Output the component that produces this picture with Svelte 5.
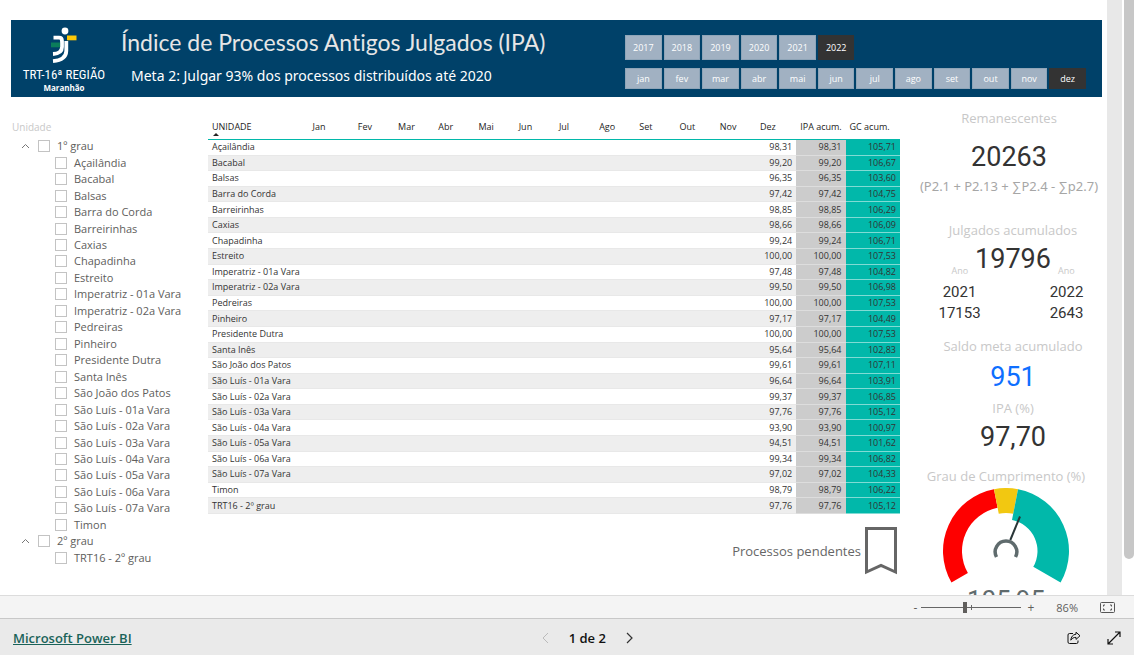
<script lang="ts">
  const years = ["2017", "2018", "2019", "2020", "2021", "2022"];
  const monthKeys = ["jan", "fev", "mar", "abr", "mai", "jun", "jul", "ago", "set", "out", "nov", "dez"];
  const monthCols = ["Jan", "Fev", "Mar", "Abr", "Mai", "Jun", "Jul", "Ago", "Set", "Out", "Nov", "Dez"];

  // unidade, IPA acumulado, grau de cumprimento acumulado
  const rows: [string, string, string][] = [
    ["Açailândia", "98,31", "105,71"],
    ["Bacabal", "99,20", "106,67"],
    ["Balsas", "96,35", "103,60"],
    ["Barra do Corda", "97,42", "104,75"],
    ["Barreirinhas", "98,85", "106,29"],
    ["Caxias", "98,66", "106,09"],
    ["Chapadinha", "99,24", "106,71"],
    ["Estreito", "100,00", "107,53"],
    ["Imperatriz - 01a Vara", "97,48", "104,82"],
    ["Imperatriz - 02a Vara", "99,50", "106,98"],
    ["Pedreiras", "100,00", "107,53"],
    ["Pinheiro", "97,17", "104,49"],
    ["Presidente Dutra", "100,00", "107,53"],
    ["Santa Inês", "95,64", "102,83"],
    ["São João dos Patos", "99,61", "107,11"],
    ["São Luís - 01a Vara", "96,64", "103,91"],
    ["São Luís - 02a Vara", "99,37", "106,85"],
    ["São Luís - 03a Vara", "97,76", "105,12"],
    ["São Luís - 04a Vara", "93,90", "100,97"],
    ["São Luís - 05a Vara", "94,51", "101,62"],
    ["São Luís - 06a Vara", "99,34", "106,82"],
    ["São Luís - 07a Vara", "97,02", "104,33"],
    ["Timon", "98,79", "106,22"],
    ["TRT16 - 2º grau", "97,76", "105,12"],
  ];

  const names = rows.map((r) => r[0]);
  const groups = [
    { name: "1º grau", units: names.slice(0, -1) },
    { name: "2º grau", units: names.slice(-1) },
  ];

  let year = $state("2022");
  let month = $state("dez");
  let open = $state([true, true]);
  let zoom = $state(43);

  // ring segment, angles in degrees clockwise from the top
  function segment(a: number, b: number, outer: number, inner: number): string {
    const p = (deg: number, r: number) => {
      const t = (deg * Math.PI) / 180;
      return `${(64 + r * Math.sin(t)).toFixed(2)} ${(63 - r * Math.cos(t)).toFixed(2)}`;
    };
    return `M${p(a, outer)}A${outer} ${outer} 0 0 1 ${p(b, outer)}L${p(b, inner)}A${inner} ${inner} 0 0 0 ${p(a, inner)}Z`;
  }
</script>

<div class="app">
  <div class="viewport">
    <div class="report">
      <header class="banner">
        <div class="logo">
          <svg width="26" height="37" viewBox="0 0 26 37" aria-hidden="true">
            <circle cx="14" cy="4" r="3.4" fill="#fff" />
            <path d="M2.500 10.700H8Q11 10.700 11 14V20Q11 26.500 2 27" fill="none" stroke="#fff" stroke-width="3.800" />
            <path d="M15.300 14V24Q15 33 2 34.200" fill="none" stroke="#fff" stroke-width="3.800" />
            <path d="M16 8.500h9.500v4.800H16z" fill="#fdc907" />
            <path d="M0 15.500h9.100v4.800H0z" fill="#0b7d5b" />
          </svg>
          <span class="logo-name">TRT-16ª REGIÃO</span>
          <span class="logo-state">Maranhão</span>
        </div>
        <div class="titles">
          <h1>Índice de Processos Antigos Julgados (IPA)</h1>
          <p>Meta 2: Julgar 93% dos processos distribuídos até 2020</p>
        </div>
        <div class="filters">
          <div class="tiles years">
            {#each years as y}
              <button class:active={y === year} onclick={() => (year = y)}>{y}</button>
            {/each}
          </div>
          <div class="tiles">
            {#each monthKeys as m}
              <button class:active={m === month} onclick={() => (month = m)}>{m}</button>
            {/each}
          </div>
        </div>
      </header>

      <main class="body">
        <section class="slicer">
          <h2>Unidade</h2>
          <div class="tree">
            {#each groups as g, i}
              <div class="node">
                <button class="toggle" aria-label={g.name} onclick={() => (open[i] = !open[i])}>
                  <svg width="9" height="6" viewBox="0 0 9 6"><path d="M1 5l3.500-3.500L8 5" fill="none" stroke="#777" /></svg>
                </button>
                <label><input type="checkbox" />{g.name}</label>
              </div>
              {#if open[i]}
                {#each g.units as u}
                  <div class="node child"><label><input type="checkbox" />{u}</label></div>
                {/each}
              {/if}
            {/each}
          </div>
        </section>

        <section class="matrix">
          <table>
            <colgroup>
              <col class="c-name" />
              <col class="c-jan" />
              {#each monthCols.slice(1) as _}<col class="c-month" />{/each}
              <col class="c-ipa" />
              <col class="c-gc" />
            </colgroup>
            <thead>
              <tr>
                <th class="sorted">UNIDADE</th>
                {#each monthCols as m}<th>{m}</th>{/each}
                <th>IPA acum.</th>
                <th>GC acum.</th>
              </tr>
            </thead>
            <tbody>
              {#each rows as [name, ipa, gc]}
                <tr>
                  <td class="name">{name}</td>
                  {#each monthCols.slice(0, -1) as _}<td></td>{/each}
                  <td>{ipa}</td>
                  <td class="ipa">{ipa}</td>
                  <td class="gc">{gc}</td>
                </tr>
              {/each}
            </tbody>
          </table>
          <button class="pending">
            Processos pendentes
            <svg width="32" height="48" viewBox="0 0 32 48"><path d="M1.500 1.500h29v43.500L16 38.500 1.500 45z" fill="none" stroke="#666" stroke-width="3" /></svg>
          </button>
        </section>

        <aside class="kpis">
          <h3>Remanescentes</h3>
          <div class="big first">20263</div>
          <div class="formula">(P2.1 + P2.13 + ∑P2.4 - ∑p2.7)</div>

          <div class="totals">
            <h3>Julgados acumulados</h3>
            <div class="judged">
              <span class="ano">Ano</span>
              <span class="big">19796</span>
              <span class="ano">Ano</span>
            </div>
            <div class="split">
              <div>2021<br />17153</div>
              <div>2022<br />2643</div>
            </div>

            <h3>Saldo meta acumulado</h3>
            <div class="big blue">951</div>
            <h3>IPA (%)</h3>
            <div class="big">97,70</div>
          </div>

          <div class="gauge">
            <h3>Grau de Cumprimento (%)</h3>
            <svg width="128" height="98" viewBox="0 0 128 98">
              <path d={segment(-120, -11, 63, 44)} fill="#fe0000" />
              <path d={segment(-11, 11, 63, 38)} fill="#f2c811" />
              <path d={segment(11, 120, 63, 31.5)} fill="#01b8aa" />
              <path d="M54.500 69A10.800 10.800 0 1 1 73.500 69" fill="none" stroke="#5f6b6d" stroke-width="3.500" />
              <path d="M68.300 52L78 28.500" stroke="#293537" stroke-width="2" />
            </svg>
            <div class="gauge-value">105,95</div>
          </div>
        </aside>
      </main>
    </div>
    <div class="gutter"></div>
    <div class="scrollbar"><div class="thumb"></div></div>
  </div>

  <div class="zoombar">
    <button aria-label="Diminuir zoom">-</button>
    <input type="range" min="0" max="100" bind:value={zoom} aria-label="Zoom" />
    <button aria-label="Aumentar zoom">+</button>
    <span class="percent">86%</span>
    <button class="fit" aria-label="Ajustar à página">
      <svg width="15" height="11" viewBox="0 0 15 11" fill="none" stroke="#555">
        <rect x=".5" y=".5" width="14" height="10" rx="1" />
        <path d="M5 3H3.500v1.500M10 3h1.500v1.500M5 8H3.500V6.500M10 8h1.500V6.500" />
      </svg>
    </button>
  </div>

  <footer class="footer">
    <a href="https://powerbi.microsoft.com">Microsoft Power BI</a>
    <nav class="pager">
      <button aria-label="Página anterior" disabled>
        <svg width="7" height="12" viewBox="0 0 7 12"><path d="M6 1L1 6l5 5" fill="none" stroke="#bbb" /></svg>
      </button>
      <span>1 de 2</span>
      <button aria-label="Próxima página">
        <svg width="7" height="12" viewBox="0 0 7 12"><path d="M1 1l5 5-5 5" fill="none" stroke="#333" stroke-width="1.200" /></svg>
      </button>
    </nav>
    <div class="actions">
      <button aria-label="Compartilhar">
        <svg width="14" height="14" viewBox="0 0 14 14" fill="none" stroke="#111" stroke-linejoin="round">
          <path d="M6 2.500H2.500a1.500 1.500 0 0 0-1.500 1.500v7A1.500 1.500 0 0 0 2.500 12.500h7a1.500 1.500 0 0 0 1.500-1.500V9.500" />
          <path d="M9 1.200l4 3.600-4 3.600V6.400C6.500 6.300 5 7.300 3.800 9.200 4 6 5.800 3.500 9 3.200z" />
        </svg>
      </button>
      <button aria-label="Tela inteira">
        <svg width="14" height="14" viewBox="0 0 14 14" fill="none" stroke="#111" stroke-width="1.200">
          <path d="M1 13L13 1M8 1h5v5M1 8v5h5" />
        </svg>
      </button>
    </div>
  </footer>
</div>

<style>
  :global(body) {
    background: #fff;
  }
  .app {
    display: flex;
    flex-direction: column;
    height: 100vh;
    font-family: "Open Sans", "Noto Sans", sans-serif;
    color: #333;
  }
  button {
    padding: 0;
    border: 0;
    background: none;
    font: inherit;
    color: inherit;
    cursor: pointer;
  }
  h1, h2, h3, p {
    margin: 0;
    font-weight: 400;
  }
  svg {
    display: block;
  }

  .viewport {
    flex: 1;
    min-height: 0;
    display: flex;
    overflow: hidden;
  }
  .report {
    flex: 1;
    min-width: 0;
    padding: 20px 0 0 11px;
  }
  .gutter {
    width: 15px;
    background: #e8e8e8;
  }
  .scrollbar {
    width: 10px;
    margin-left: 2px;
  }
  .thumb {
    height: 94%;
    border-radius: 0 0 5px 5px;
    background: #c7c7c7;
  }

  .banner {
    display: flex;
    height: 77px;
    margin-right: 5px;
    background: #004169;
    color: #fff;
  }
  .logo {
    width: 106px;
    padding-top: 7px;
    display: flex;
    flex-direction: column;
    align-items: center;
  }
  .logo-name {
    margin-top: 2px;
    font: 13px/18px "Roboto Condensed", Roboto, sans-serif;
    white-space: nowrap;
  }
  .logo-state {
    font-size: 8px;
    line-height: 8px;
    font-weight: 700;
  }
  .titles {
    flex: 1;
    padding: 6px 0 0 4px;
    white-space: nowrap;
  }
  h1 {
    font: 23px/32px Lato, "Open Sans", sans-serif;
    font-variant-ligatures: none;
    color: #e6e6e6;
  }
  .titles p {
    padding: 8px 0 0 10px;
    font: 14px/20px "Noto Sans", sans-serif;
  }
  .filters {
    width: 461px;
    margin-right: 16px;
    padding-top: 15px;
  }
  .tiles {
    display: grid;
    grid-template-columns: repeat(12, 1fr);
    gap: 2px;
    margin-bottom: 8px;
  }
  .tiles button {
    height: 21px;
    background: #a1b1c2;
    border: 1px solid #8fa5b8;
    font-size: 9px;
    font-weight: 500;
    color: #fff;
  }
  .years button {
    height: 25px;
  }
  .tiles .active {
    background: #333;
    border-color: #333;
  }

  .body {
    display: grid;
    grid-template-columns: 197px minmax(0, 1fr) 207px;
  }
  .slicer h2 {
    padding: 22px 0 0 1px;
    font-size: 10px;
    line-height: 16px;
    color: #c8c8c8;
  }
  .tree {
    display: grid;
    grid-auto-rows: 1fr;
    height: 428px;
    margin-top: 3px;
    font-size: 11px;
    color: #605e5c;
  }
  .node {
    display: flex;
    align-items: center;
    padding-left: 10px;
  }
  .node.child {
    padding-left: 44px;
  }
  .toggle {
    width: 17px;
  }
  .node label {
    display: flex;
    align-items: center;
    gap: 7px;
    line-height: 16px;
    white-space: nowrap;
  }
  .node input {
    appearance: none;
    width: 12px;
    height: 12px;
    margin: 0;
    border: 1px solid #c3c3c3;
    background: #fff;
  }
  .node input:checked {
    background: #605e5c;
  }

  .matrix {
    padding-top: 20px;
  }
  table {
    width: 100%;
    height: 397px;
    table-layout: fixed;
    border-collapse: collapse;
    font-size: 9px;
    line-height: 12px;
  }
  .c-name { width: 100px; }
  .c-jan { width: 45px; }
  .c-month { width: 40px; }
  .c-ipa { width: 49px; }
  .c-gc { width: 54px; }
  th {
    height: 20px;
    padding: 0 0 2px 4px;
    border-bottom: 1px solid #01b8aa;
    text-align: left;
    font-weight: 400;
    color: #252423;
    white-space: nowrap;
  }
  .sorted {
    position: relative;
  }
  .sorted::after {
    content: "";
    position: absolute;
    left: 5px;
    bottom: 3px;
    border: 3px solid transparent;
    border-top: 0;
    border-bottom-color: #252423;
  }
  td {
    height: 14px;
    padding: 0 4px;
    border-bottom: 1px solid #e8e8e8;
    text-align: right;
    white-space: nowrap;
  }
  tbody tr:nth-child(even) {
    background: #eee;
  }
  td.name {
    text-align: left;
  }
  td.ipa {
    background: #ccc;
    border-bottom-color: #ddd;
  }
  td.gc {
    background: #01b8aa;
    border-bottom-color: #80dbd4;
  }
  .pending {
    display: flex;
    align-items: center;
    gap: 4px;
    margin: 13px 3px 0 auto;
    font-size: 13px;
    color: #666;
  }

  .kpis {
    padding: 11px 0 0 11px;
    text-align: center;
    white-space: nowrap;
  }
  h3, .formula {
    font-size: 13px;
    line-height: 20px;
    color: #c8c8c8;
  }
  .formula {
    font-family: "Noto Sans", sans-serif;
    color: #a6a6a6;
  }
  .totals {
    padding: 24px 0 0 8px;
  }
  .big {
    font: 27px/38px Roboto, sans-serif;
  }
  .first {
    padding-top: 10px;
  }
  .judged {
    display: flex;
    justify-content: center;
    align-items: flex-end;
    gap: 7px;
  }
  .ano {
    font-size: 9px;
    line-height: 14px;
    color: #c8c8c8;
  }
  .split {
    display: flex;
    justify-content: center;
    gap: 65px;
    padding: 4px 0 12px;
    font: 15px/21px Roboto, sans-serif;
  }
  .split div {
    width: 42px;
  }
  .blue {
    padding: 2px 0;
    color: #0f6fff;
  }
  .gauge {
    padding: 10px 6px 0 0;
  }
  .gauge svg {
    margin: 2px auto 0;
  }
  .gauge-value {
    font: 26px/28px Roboto, sans-serif;
    color: #5f6b6d;
  }

  .zoombar {
    display: flex;
    align-items: center;
    justify-content: flex-end;
    height: 22px;
    padding-right: 19px;
    border-top: 1px solid #dcdcdc;
    background: #f4f4f4;
    font-size: 12px;
    color: #605e5c;
  }
  .zoombar input {
    appearance: none;
    width: 100px;
    height: 12px;
    margin: 0 6px 0 4px;
    background:
      linear-gradient(#666, #666) 50px 50% / 1px 5px no-repeat,
      linear-gradient(#666, #666) 0 50% / 100% 1px no-repeat;
  }
  .zoombar input::-webkit-slider-thumb {
    appearance: none;
    width: 4px;
    height: 11px;
    background: #605e5c;
  }
  .percent {
    margin: 0 22px;
    font-size: 11px;
  }

  .footer {
    display: flex;
    align-items: center;
    justify-content: space-between;
    height: 35px;
    padding: 1px 0 0 13px;
    border-top: 1px solid #c8c8c8;
    background: #eaeaea;
  }
  .footer a {
    font-size: 13px;
    font-weight: 600;
    color: #1a6359;
  }
  .pager {
    display: flex;
    align-items: center;
    gap: 20px;
    font-size: 13px;
    font-weight: 600;
    color: #111;
  }
  .actions {
    display: flex;
    padding-left: 11px;
  }
  .actions button {
    width: 40px;
    display: flex;
    justify-content: center;
  }
</style>
